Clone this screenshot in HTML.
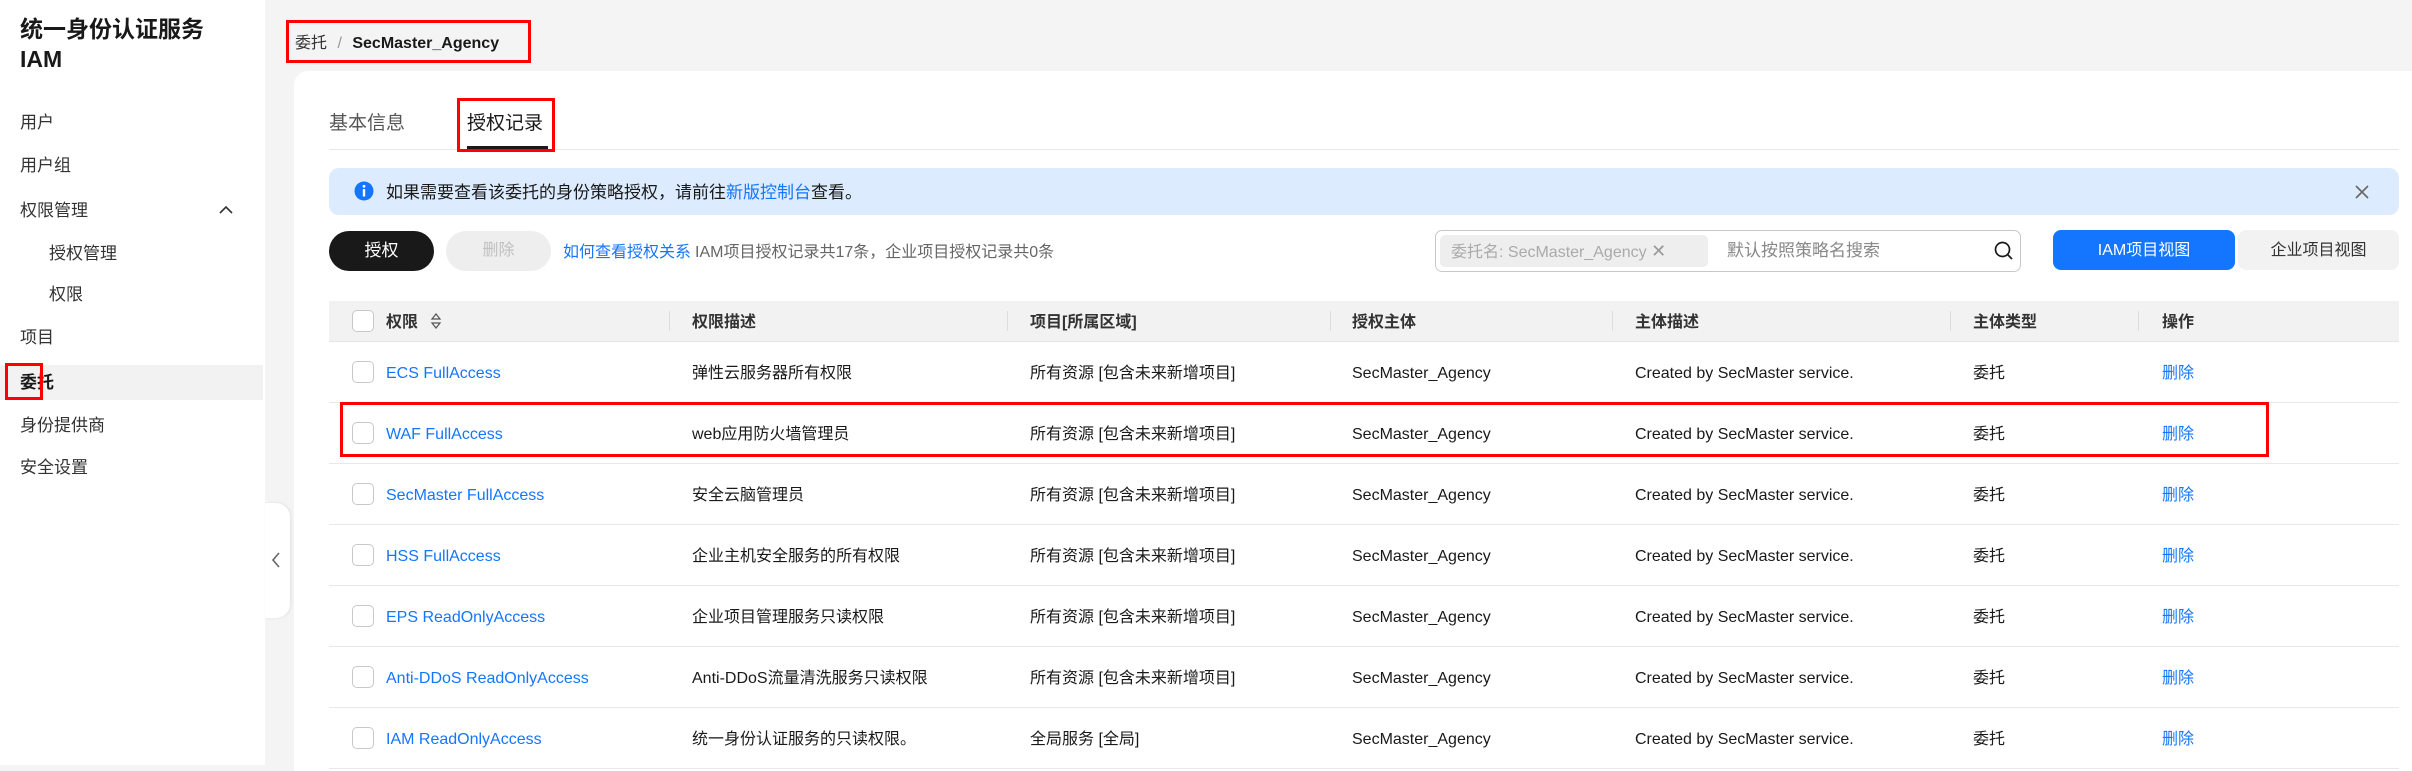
<!DOCTYPE html>
<html><head><meta charset="utf-8"><style>
*{margin:0;padding:0;box-sizing:border-box}
body{width:2412px;height:765px;overflow:hidden;background:#f4f4f4;font-family:"Liberation Sans","Noto Sans CJK SC",sans-serif;color:#191919;position:relative;font-size:16px}
.a{position:absolute;white-space:nowrap;line-height:25px}
.side{position:absolute;left:0;top:0;width:265px;height:765px;background:#fff}
.mi{position:absolute;left:20px;font-size:17px;color:#333;line-height:22px}
.card{position:absolute;left:294px;top:71px;width:2118px;height:700px;background:#fff;border-radius:14px 0 0 0}
.red{position:absolute;border:3px solid #f00}
.hl{color:#1476ff}
.cb{position:absolute;left:352px;width:22px;height:22px;border:1.5px solid #c8c8c8;border-radius:5px;background:#fff}
.row{position:absolute;left:329px;width:2070px;height:61px;border-bottom:1px solid #e8e8e8}
.th{position:absolute;font-weight:bold;color:#333;font-size:16px;line-height:25px;white-space:nowrap}
.sep{position:absolute;top:311px;width:1px;height:20px;background:#ddd}
</style></head><body>
<div class="side">
<div class="a" style="left:20px;top:14px;font-size:23px;font-weight:bold;line-height:30px">统一身份认证服务</div>
<div class="a" style="left:20px;top:44px;font-size:23px;font-weight:bold;line-height:30px">IAM</div>
<div class="mi a" style="top:112px;line-height:22px">用户</div>
<div class="mi a" style="top:155px;line-height:22px">用户组</div>
<div class="mi a" style="top:200px;line-height:22px">权限管理</div>
<svg class="a" style="left:218px;top:204px" width="16" height="12"><path d="M2 9 L8 3 L14 9" stroke="#333" stroke-width="1.6" fill="none"/></svg>
<div class="mi a" style="top:243px;left:49px;line-height:22px">授权管理</div>
<div class="mi a" style="top:284px;left:49px;line-height:22px">权限</div>
<div class="mi a" style="top:327px;line-height:22px">项目</div>
<div class="a" style="left:0;top:365px;width:263px;height:35px;background:#f2f2f2"></div>
<div class="mi a" style="top:372px;font-weight:bold;color:#191919;line-height:22px">委托</div>
<div class="red" style="left:5px;top:363px;width:38px;height:37px"></div>
<div class="mi a" style="top:415px;line-height:22px">身份提供商</div>
<div class="mi a" style="top:457px;line-height:22px">安全设置</div>
</div>
<div class="a" style="left:265px;top:503px;width:25px;height:115px;background:#fff;border-radius:0 14px 14px 0;box-shadow:1px 0 3px rgba(0,0,0,.08)"></div>
<svg class="a" style="left:270px;top:550px" width="12" height="20"><path d="M9 3 L3 10 L9 17" stroke="#666" stroke-width="1.6" fill="none"/></svg>

<div class="a" style="left:295px;top:31px;font-size:16px;color:#333">委托 <span style="color:#999;margin:0 6px">/</span> <b style="color:#191919">SecMaster_Agency</b></div>
<div class="red" style="left:286px;top:20px;width:245px;height:43px"></div>

<div class="card"></div>
<div class="a" style="left:329px;top:112px;font-size:19px;line-height:24px;color:#555">基本信息</div>
<div class="a" style="left:467px;top:112px;font-size:19px;line-height:24px;color:#191919">授权记录</div>
<div class="a" style="left:329px;top:149px;width:2070px;height:1px;background:#e8e8e8"></div>
<div class="a" style="left:467px;top:146px;width:81px;height:3px;background:#191919"></div>
<div class="red" style="left:457px;top:98px;width:98px;height:54px"></div>

<div class="a" style="left:329px;top:168px;width:2070px;height:47px;background:#dcebfd;border-radius:10px"></div>
<svg class="a" style="left:354px;top:181px" width="20" height="20"><circle cx="10" cy="10" r="9.5" fill="#1476ff"/><rect x="8.8" y="8" width="2.4" height="7.5" fill="#fff"/><circle cx="10" cy="5.3" r="1.4" fill="#fff"/></svg>
<div class="a" style="left:386px;top:180px;font-size:17px;color:#191919">如果需要查看该委托的身份策略授权，请前往<span class="hl">新版控制台</span>查看。</div>
<svg class="a" style="left:2353px;top:183px" width="18" height="18"><path d="M3 3 L15 15 M15 3 L3 15" stroke="#666" stroke-width="1.6"/></svg>

<div class="a" style="left:329px;top:231px;width:105px;height:40px;background:#191919;border-radius:20px;color:#fff;font-size:17px;text-align:center;line-height:40px">授权</div>
<div class="a" style="left:446px;top:231px;width:105px;height:40px;background:#eee;border-radius:20px;color:#c0c0c0;font-size:16px;text-align:center;line-height:40px">删除</div>
<div class="a hl" style="left:563px;top:240px;font-size:16px">如何查看授权关系</div>
<div class="a" style="left:695px;top:240px;font-size:16px;color:#666">IAM项目授权记录共17条，企业项目授权记录共0条</div>

<div class="a" style="left:1435px;top:230px;width:586px;height:42px;border:1.5px solid #c8c8c8;border-radius:7px"></div>
<div class="a" style="left:1440px;top:235px;width:268px;height:32px;background:#eee;border-radius:5px;color:#aaa;font-size:16px;line-height:32px;padding-left:11px">委托名: SecMaster_Agency <span style="color:#999;font-size:18px">✕</span></div>
<div class="a" style="left:1727px;top:238px;font-size:17px;color:#888">默认按照策略名搜索</div>
<svg class="a" style="left:1993px;top:240px" width="22" height="22"><circle cx="9.5" cy="9.5" r="7" stroke="#191919" stroke-width="1.7" fill="none"/><path d="M14.5 14.5 L19 19" stroke="#191919" stroke-width="1.7"/></svg>
<div class="a" style="left:2053px;top:230px;width:182px;height:40px;background:#1476ff;border-radius:8px;color:#fff;font-size:16px;text-align:center;line-height:42px">IAM项目视图</div>
<div class="a" style="left:2238px;top:230px;width:161px;height:40px;background:#f2f2f2;border-radius:8px;color:#333;font-size:16px;text-align:center;line-height:42px">企业项目视图</div>

<div class="a" style="left:329px;top:301px;width:2070px;height:41px;background:#f2f2f2;border-bottom:1px solid #e4e4e4"></div>
<div class="cb" style="top:310px"></div>
<div class="th" style="left:386px;top:310px">权限</div>
<svg class="a" style="left:430px;top:311px" width="12" height="20"><path d="M2 8 L6 3 L10 8 Z M2 12 L6 17 L10 12 Z" stroke="#555" stroke-width="1.2" fill="none"/></svg>
<div class="sep" style="left:669px"></div><div class="th" style="left:692px;top:310px">权限描述</div>
<div class="sep" style="left:1007px"></div><div class="th" style="left:1030px;top:310px">项目[所属区域]</div>
<div class="sep" style="left:1330px"></div><div class="th" style="left:1352px;top:310px">授权主体</div>
<div class="sep" style="left:1612px"></div><div class="th" style="left:1635px;top:310px">主体描述</div>
<div class="sep" style="left:1950px"></div><div class="th" style="left:1973px;top:310px">主体类型</div>
<div class="sep" style="left:2138px"></div><div class="th" style="left:2162px;top:310px">操作</div>

<div class="row" style="top:342px"></div><div class="row" style="top:403px"></div><div class="row" style="top:464px"></div><div class="row" style="top:525px"></div><div class="row" style="top:586px"></div><div class="row" style="top:647px"></div><div class="row" style="top:708px"></div>

<div class="cb" style="top:361px"></div><div class="a hl" style="left:386px;top:361px">ECS FullAccess</div><div class="a" style="left:692px;top:361px">弹性云服务器所有权限</div><div class="a" style="left:1030px;top:361px">所有资源 [包含未来新增项目]</div><div class="a" style="left:1352px;top:361px">SecMaster_Agency</div><div class="a" style="left:1635px;top:361px">Created by SecMaster service.</div><div class="a" style="left:1973px;top:361px">委托</div><div class="a hl" style="left:2162px;top:361px">删除</div>
<div class="cb" style="top:422px"></div><div class="a hl" style="left:386px;top:422px">WAF FullAccess</div><div class="a" style="left:692px;top:422px">web应用防火墙管理员</div><div class="a" style="left:1030px;top:422px">所有资源 [包含未来新增项目]</div><div class="a" style="left:1352px;top:422px">SecMaster_Agency</div><div class="a" style="left:1635px;top:422px">Created by SecMaster service.</div><div class="a" style="left:1973px;top:422px">委托</div><div class="a hl" style="left:2162px;top:422px">删除</div>
<div class="cb" style="top:483px"></div><div class="a hl" style="left:386px;top:483px">SecMaster FullAccess</div><div class="a" style="left:692px;top:483px">安全云脑管理员</div><div class="a" style="left:1030px;top:483px">所有资源 [包含未来新增项目]</div><div class="a" style="left:1352px;top:483px">SecMaster_Agency</div><div class="a" style="left:1635px;top:483px">Created by SecMaster service.</div><div class="a" style="left:1973px;top:483px">委托</div><div class="a hl" style="left:2162px;top:483px">删除</div>
<div class="cb" style="top:544px"></div><div class="a hl" style="left:386px;top:544px">HSS FullAccess</div><div class="a" style="left:692px;top:544px">企业主机安全服务的所有权限</div><div class="a" style="left:1030px;top:544px">所有资源 [包含未来新增项目]</div><div class="a" style="left:1352px;top:544px">SecMaster_Agency</div><div class="a" style="left:1635px;top:544px">Created by SecMaster service.</div><div class="a" style="left:1973px;top:544px">委托</div><div class="a hl" style="left:2162px;top:544px">删除</div>
<div class="cb" style="top:605px"></div><div class="a hl" style="left:386px;top:605px">EPS ReadOnlyAccess</div><div class="a" style="left:692px;top:605px">企业项目管理服务只读权限</div><div class="a" style="left:1030px;top:605px">所有资源 [包含未来新增项目]</div><div class="a" style="left:1352px;top:605px">SecMaster_Agency</div><div class="a" style="left:1635px;top:605px">Created by SecMaster service.</div><div class="a" style="left:1973px;top:605px">委托</div><div class="a hl" style="left:2162px;top:605px">删除</div>
<div class="cb" style="top:666px"></div><div class="a hl" style="left:386px;top:666px">Anti-DDoS ReadOnlyAccess</div><div class="a" style="left:692px;top:666px">Anti-DDoS流量清洗服务只读权限</div><div class="a" style="left:1030px;top:666px">所有资源 [包含未来新增项目]</div><div class="a" style="left:1352px;top:666px">SecMaster_Agency</div><div class="a" style="left:1635px;top:666px">Created by SecMaster service.</div><div class="a" style="left:1973px;top:666px">委托</div><div class="a hl" style="left:2162px;top:666px">删除</div>
<div class="cb" style="top:727px"></div><div class="a hl" style="left:386px;top:727px">IAM ReadOnlyAccess</div><div class="a" style="left:692px;top:727px">统一身份认证服务的只读权限。</div><div class="a" style="left:1030px;top:727px">全局服务 [全局]</div><div class="a" style="left:1352px;top:727px">SecMaster_Agency</div><div class="a" style="left:1635px;top:727px">Created by SecMaster service.</div><div class="a" style="left:1973px;top:727px">委托</div><div class="a hl" style="left:2162px;top:727px">删除</div>

<div class="red" style="left:340px;top:402px;width:1929px;height:55px"></div>
</body></html>
